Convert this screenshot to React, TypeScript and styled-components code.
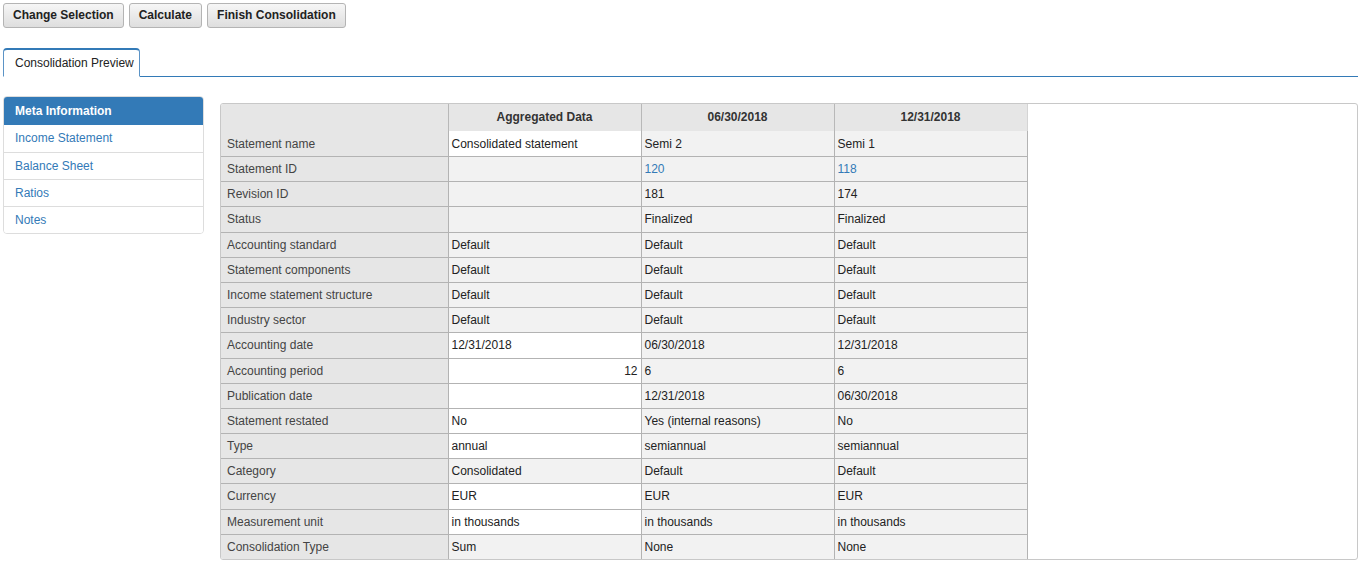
import styled, { createGlobalStyle } from "styled-components";

type Cell = { text?: string; link?: boolean; white?: boolean; right?: boolean };

interface RowData {
  label: string;
  cells: Cell[];
  tall?: boolean;
}

const rows: RowData[] = [
  { label: "Statement name", cells: [{ text: "Consolidated statement", white: true }, { text: "Semi 2" }, { text: "Semi 1" }] },
  { label: "Statement ID", cells: [{}, { text: "120", link: true }, { text: "118", link: true }] },
  { label: "Revision ID", cells: [{}, { text: "181" }, { text: "174" }] },
  { label: "Status", cells: [{}, { text: "Finalized" }, { text: "Finalized" }], tall: true },
  { label: "Accounting standard", cells: [{ text: "Default" }, { text: "Default" }, { text: "Default" }] },
  { label: "Statement components", cells: [{ text: "Default" }, { text: "Default" }, { text: "Default" }] },
  { label: "Income statement structure", cells: [{ text: "Default" }, { text: "Default" }, { text: "Default" }] },
  { label: "Industry sector", cells: [{ text: "Default" }, { text: "Default" }, { text: "Default" }] },
  { label: "Accounting date", cells: [{ text: "12/31/2018", white: true }, { text: "06/30/2018" }, { text: "12/31/2018" }], tall: true },
  { label: "Accounting period", cells: [{ text: "12", white: true, right: true }, { text: "6" }, { text: "6" }] },
  { label: "Publication date", cells: [{ white: true }, { text: "12/31/2018" }, { text: "06/30/2018" }] },
  { label: "Statement restated", cells: [{ text: "No", white: true }, { text: "Yes (internal reasons)" }, { text: "No" }] },
  { label: "Type", cells: [{ text: "annual", white: true }, { text: "semiannual" }, { text: "semiannual" }] },
  { label: "Category", cells: [{ text: "Consolidated" }, { text: "Default" }, { text: "Default" }] },
  { label: "Currency", cells: [{ text: "EUR", white: true }, { text: "EUR" }, { text: "EUR" }], tall: true },
  { label: "Measurement unit", cells: [{ text: "in thousands", white: true }, { text: "in thousands" }, { text: "in thousands" }] },
  { label: "Consolidation Type", cells: [{ text: "Sum" }, { text: "None" }, { text: "None" }] },
];

const navItems = ["Meta Information", "Income Statement", "Balance Sheet", "Ratios", "Notes"];

export default function App() {
  return (
    <>
      <GlobalStyle />
      <Page>
        <Toolbar>
          <Button>Change Selection</Button>
          <Button>Calculate</Button>
          <Button>Finish Consolidation</Button>
        </Toolbar>

        <TabBar>
          <Tab>Consolidation Preview</Tab>
        </TabBar>

        <Content>
          <Sidebar>
            {navItems.map((item, i) => (
              <NavItem key={item} active={i === 0}>
                {item}
              </NavItem>
            ))}
          </Sidebar>

          <TablePanel>
            <Table>
              <colgroup>
                <col style={{ width: 227 }} />
                <col style={{ width: 193 }} />
                <col style={{ width: 193 }} />
                <col style={{ width: 193 }} />
              </colgroup>
              <thead>
                <tr>
                  <HeadCell />
                  <HeadCell>Aggregated Data</HeadCell>
                  <HeadCell>06/30/2018</HeadCell>
                  <HeadCell>12/31/2018</HeadCell>
                </tr>
              </thead>
              <tbody>
                {rows.map((row, r) => (
                  <Row key={row.label} first={r === 0} tall={!!row.tall}>
                    <LabelCell>{row.label}</LabelCell>
                    {row.cells.map((c, i) => (
                      <DataCell key={i} white={!!c.white} right={!!c.right}>
                        {c.link ? <Link>{c.text}</Link> : c.text}
                      </DataCell>
                    ))}
                  </Row>
                ))}
              </tbody>
            </Table>
          </TablePanel>
        </Content>
      </Page>
    </>
  );
}

const GlobalStyle = createGlobalStyle`
  body {
    margin: 0;
    background: #fff;
    font-family: "Liberation Sans", Arial, sans-serif;
    font-size: 12px;
    color: #333;
  }
`;

const Page = styled.div`
  padding: 3px 2px 0 3px;
  width: 1360px;
  box-sizing: border-box;
`;

const Toolbar = styled.div`
  display: flex;
  gap: 5px;
  height: 25px;
`;

const Button = styled.button`
  height: 25px;
  padding: 0 9px 2px;
  font-family: "Liberation Sans", Arial, sans-serif;
  font-size: 12px;
  font-weight: bold;
  color: #222;
  background: linear-gradient(#f6f6f6, #dedede);
  border: 1px solid #b4b4b4;
  border-radius: 3px;
  cursor: pointer;
`;

const TabBar = styled.div`
  display: flex;
  margin-top: 20px;
  border-bottom: 1px solid #337ab7;
`;

const Tab = styled.div`
  height: 29px;
  line-height: 26px;
  padding: 0 5px 0 11px;
  margin-bottom: -1px;
  background: #fff;
  border: 1px solid #5b93c6;
  border-top: 2px solid #337ab7;
  border-bottom: 1px solid #fff;
  border-radius: 4px 4px 0 0;
  color: #222;
  box-sizing: border-box;
`;

const Content = styled.div`
  display: flex;
  align-items: flex-start;
  gap: 16px;
  margin-top: 20px;
`;

const Sidebar = styled.div`
  width: 201px;
  flex: none;
  margin-top: -1px;
  border: 1px solid #ddd;
  border-radius: 4px;
  overflow: hidden;
  box-sizing: border-box;
`;

const NavItem = styled.div<{ active: boolean }>`
  height: ${(p) => (p.active ? "28px" : "27px")};
  line-height: ${(p) => (p.active ? "28px" : "26px")};
  padding-left: 11px;
  background: ${(p) => (p.active ? "#337ab7" : "#fff")};
  color: ${(p) => (p.active ? "#fff" : "#337ab7")};
  font-weight: ${(p) => (p.active ? "bold" : "normal")};
  border-top: ${(p) => (p.active ? "none" : "1px solid #ddd")};
  box-sizing: border-box;
  &:nth-child(2) {
    border-top: none;
    height: 27px;
    line-height: 27px;
  }
`;

const TablePanel = styled.div`
  flex: 1;
  margin-top: 6px;
  border: 1px solid #c8c8c8;
  border-radius: 3px;
  overflow: hidden;
  background: #fff;
`;

const Table = styled.table`
  border-collapse: collapse;
  table-layout: fixed;
  width: 806px;
`;

const HeadCell = styled.th`
  height: 25px;
  padding: 0 4px 2px;
  background: #e6e6e6;
  border-left: 1px solid #b8b8b8;
  font-weight: bold;
  color: #333;
  text-align: center;
  &:first-child {
    border-left: none;
  }
  &:last-child {
    border-right: 1px solid #d4d4d4;
  }
`;

const Row = styled.tr<{ first: boolean; tall: boolean }>`
  height: ${(p) => (p.first ? "25px" : p.tall ? "26px" : "25px")};
  & > td {
    border-top: ${(p) => (p.first ? "none" : "1px solid #b3b3b3")};
    padding-top: ${(p) => (p.first ? "1px" : "0")};
  }
`;

const LabelCell = styled.td`
  padding: 0 6px;
  background: #e6e6e6;
  color: #444;
  white-space: nowrap;
`;

const DataCell = styled.td<{ white: boolean; right: boolean }>`
  padding: 0 3px;
  background: ${(p) => (p.white ? "#fff" : "#f2f2f2")};
  border-left: 1px solid #b3b3b3;
  color: #222;
  text-align: ${(p) => (p.right ? "right" : "left")};
  white-space: nowrap;
  &:last-child {
    border-right: 1px solid #b3b3b3;
  }
`;

const Link = styled.span`
  color: #337ab7;
`;
